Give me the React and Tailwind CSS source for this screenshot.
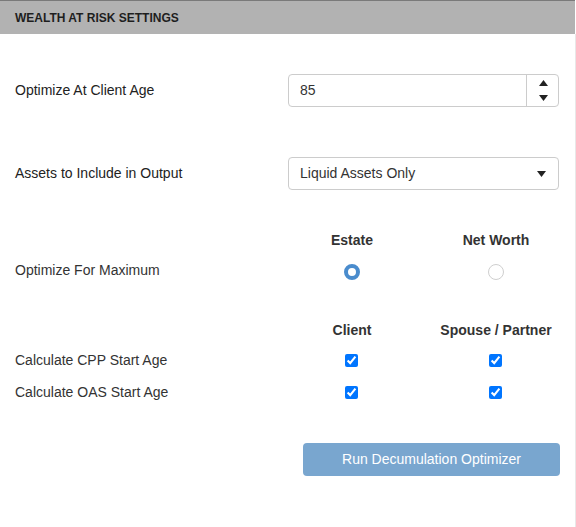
import React from "react";

const font = { fontFamily: '"Liberation Sans", Arial, sans-serif' };

function Tri({ dir = "down" }) {
  return (
    <svg width="9" height="6" viewBox="0 0 9 6" className="block">
      {dir === "down" ? (
        <polygon points="0,0 9,0 4.5,6" fill="#222" />
      ) : (
        <polygon points="0,6 9,6 4.5,0" fill="#222" />
      )}
    </svg>
  );
}

export default function App() {
  return (
    <div className="w-[576px] h-[527px] bg-white flex flex-col text-[#333]" style={font}>
      <div className="w-[575px] h-[34px] bg-[#b2b2b2] border-t border-[#7a7a7a] flex items-center pl-[15px]">
        <span className="text-[12px] font-bold text-[#1e1e1e]">WEALTH AT RISK SETTINGS</span>
      </div>
      <div className="flex-1 border-r border-[#e8e8e8] pl-[15px] flex flex-col text-[14px]">
        {/* Row 1 */}
        <div className="mt-[40px] flex items-center h-[33px]">
          <div className="w-[273px] text-[#222]">Optimize At Client Age</div>
          <div className="w-[271px] h-[33px] border border-[#ccc] rounded-[4px] flex items-stretch">
            <div className="flex-1 flex items-center pl-[11px] text-[#333]">85</div>
            <div className="w-[32px] border-l border-[#ccc] flex flex-col items-center justify-center gap-[9px] pl-[1px]">
              <Tri dir="up" />
              <Tri dir="down" />
            </div>
          </div>
        </div>
        {/* Row 2 */}
        <div className="mt-[50px] flex items-center h-[33px]">
          <div className="w-[273px] text-[#222]">Assets to Include in Output</div>
          <div className="w-[271px] h-[33px] border border-[#ccc] rounded-[4px] flex items-center justify-between pl-[11px] pr-[12px]">
            <span className="text-[#333]">Liquid Assets Only</span>
            <Tri dir="down" />
          </div>
        </div>
        {/* Headers */}
        <div className="mt-[40px] flex items-center h-[20px] font-bold">
          <div className="w-[265px]"></div>
          <div className="w-[144px] text-center">Estate</div>
          <div className="w-[144px] text-center">Net Worth</div>
        </div>
        <div className="mt-[12px] flex items-center h-[20px]">
          <div className="w-[265px] -mt-[4px]">Optimize For Maximum</div>
          <div className="w-[144px] flex justify-center">
            <div className="w-[16px] h-[16px] rounded-full border-[4px] border-[#4a8ccd] bg-white"></div>
          </div>
          <div className="w-[144px] flex justify-center">
            <div className="w-[16px] h-[16px] rounded-full border border-[#cfcfcf] bg-white"></div>
          </div>
        </div>
        <div className="mt-[38px] flex items-center h-[20px] font-bold">
          <div className="w-[265px]"></div>
          <div className="w-[144px] text-center">Client</div>
          <div className="w-[144px] text-center">Spouse / Partner</div>
        </div>
        <div className="mt-[10px] flex items-center h-[20px]">
          <div className="w-[265px]">Calculate CPP Start Age</div>
          <div className="w-[144px] flex justify-center pr-[1px]">
            <input type="checkbox" defaultChecked className="w-[13px] h-[13px] m-0 accent-[#0075ff]" />
          </div>
          <div className="w-[144px] flex justify-center pr-[1px]">
            <input type="checkbox" defaultChecked className="w-[13px] h-[13px] m-0 accent-[#0075ff]" />
          </div>
        </div>
        <div className="mt-[12px] flex items-center h-[20px]">
          <div className="w-[265px]">Calculate OAS Start Age</div>
          <div className="w-[144px] flex justify-center pr-[1px]">
            <input type="checkbox" defaultChecked className="w-[13px] h-[13px] m-0 accent-[#0075ff]" />
          </div>
          <div className="w-[144px] flex justify-center pr-[1px]">
            <input type="checkbox" defaultChecked className="w-[13px] h-[13px] m-0 accent-[#0075ff]" />
          </div>
        </div>
        <div className="mt-[41px] flex">
          <button className="ml-[288px] w-[257px] h-[33px] rounded-[4px] bg-[#79a6cf] text-white text-[14px] flex items-center justify-center">
            Run Decumulation Optimizer
          </button>
        </div>
      </div>
    </div>
  );
}
